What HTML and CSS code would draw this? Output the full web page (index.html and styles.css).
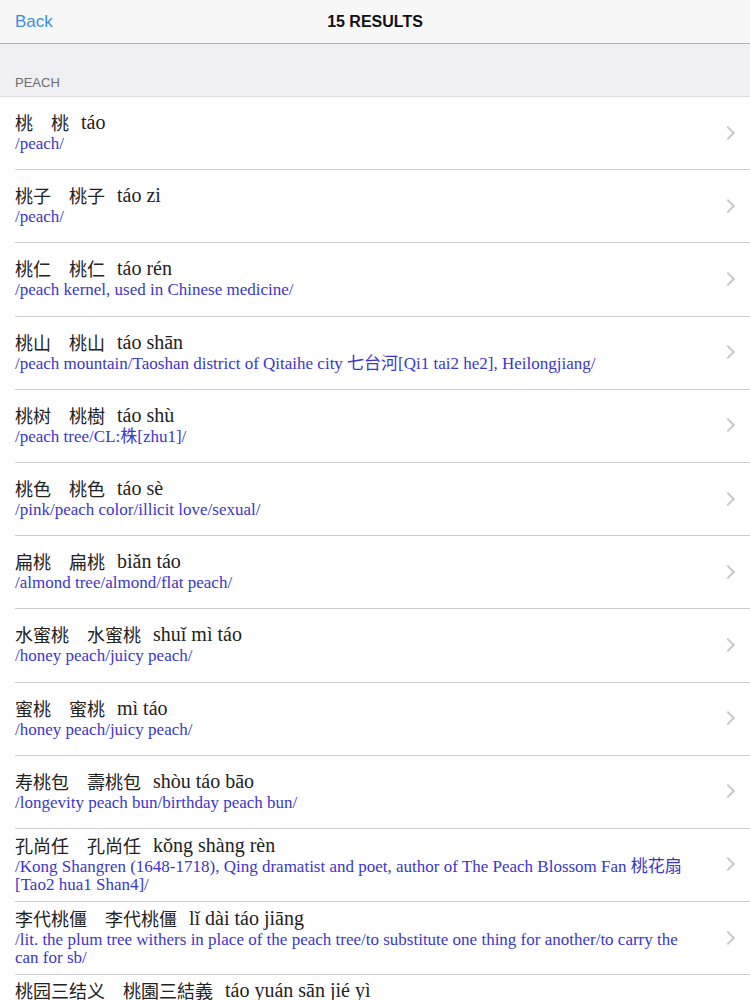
FILE: index.html
```html
<!DOCTYPE html>
<html>
<head>
<meta charset="utf-8">
<link rel="stylesheet" href="styles.css">
</head>
<body>
<div class="nav">
  <span class="back">Back</span>
  <span class="title">15 RESULTS</span>
</div>
<div class="section">PEACH</div>
<ul class="list">
  <li class="row"><div class="text"><div class="head"><span class="s">桃</span><span class="t">桃</span><span class="p">táo</span></div><div class="def">/peach/</div></div><span class="chev"></span></li>
  <li class="row"><div class="text"><div class="head"><span class="s">桃子</span><span class="t">桃子</span><span class="p">táo zi</span></div><div class="def">/peach/</div></div><span class="chev"></span></li>
  <li class="row"><div class="text"><div class="head"><span class="s">桃仁</span><span class="t">桃仁</span><span class="p">táo rén</span></div><div class="def">/peach kernel, used in Chinese medicine/</div></div><span class="chev"></span></li>
  <li class="row"><div class="text"><div class="head"><span class="s">桃山</span><span class="t">桃山</span><span class="p">táo shān</span></div><div class="def">/peach mountain/Taoshan district of Qitaihe city 七台河[Qi1 tai2 he2], Heilongjiang/</div></div><span class="chev"></span></li>
  <li class="row"><div class="text"><div class="head"><span class="s">桃树</span><span class="t">桃樹</span><span class="p">táo shù</span></div><div class="def">/peach tree/CL:株[zhu1]/</div></div><span class="chev"></span></li>
  <li class="row"><div class="text"><div class="head"><span class="s">桃色</span><span class="t">桃色</span><span class="p">táo sè</span></div><div class="def">/pink/peach color/illicit love/sexual/</div></div><span class="chev"></span></li>
  <li class="row"><div class="text"><div class="head"><span class="s">扁桃</span><span class="t">扁桃</span><span class="p">biǎn táo</span></div><div class="def">/almond tree/almond/flat peach/</div></div><span class="chev"></span></li>
  <li class="row"><div class="text"><div class="head"><span class="s">水蜜桃</span><span class="t">水蜜桃</span><span class="p">shuǐ mì táo</span></div><div class="def">/honey peach/juicy peach/</div></div><span class="chev"></span></li>
  <li class="row"><div class="text"><div class="head"><span class="s">蜜桃</span><span class="t">蜜桃</span><span class="p">mì táo</span></div><div class="def">/honey peach/juicy peach/</div></div><span class="chev"></span></li>
  <li class="row"><div class="text"><div class="head"><span class="s">寿桃包</span><span class="t">壽桃包</span><span class="p">shòu táo bāo</span></div><div class="def">/longevity peach bun/birthday peach bun/</div></div><span class="chev"></span></li>
  <li class="row"><div class="text"><div class="head"><span class="s">孔尚任</span><span class="t">孔尚任</span><span class="p">kǒng shàng rèn</span></div><div class="def">/Kong Shangren (1648-1718), Qing dramatist and poet, author of The Peach Blossom Fan 桃花扇[Tao2 hua1 Shan4]/</div></div><span class="chev"></span></li>
  <li class="row"><div class="text"><div class="head"><span class="s">李代桃僵</span><span class="t">李代桃僵</span><span class="p">lǐ dài táo jiāng</span></div><div class="def">/lit. the plum tree withers in place of the peach tree/to substitute one thing for another/to carry the can for sb/</div></div><span class="chev"></span></li>
  <li class="row"><div class="text"><div class="head"><span class="s">桃园三结义</span><span class="t">桃園三結義</span><span class="p">táo yuán sān jié yì</span></div><div class="def">/Oath of the Peach Garden, sworn by Liu Bei 劉備[Liu2 Bei4], Zhang Fei 張飛[Zhang1 Fei1] and Guan Yu 關羽[Guan1 Yu3] at the start of the Romance of the Three Kingdoms 三國演義[San1 guo2 Yan3 yi4]/</div></div><span class="chev"></span></li>
</ul>
</body>
</html>
```
FILE: styles.css
```css
html, body {
  margin: 0;
  padding: 0;
  background: #ffffff;
  overflow: hidden;
}
body {
  font-family: "Liberation Serif", "Noto Sans CJK SC", serif;
  width: 750px;
}
.nav {
  height: 43px;
  background: #f7f7f8;
  border-bottom: 1px solid #b4b4b6;
  display: flex;
  align-items: center;
  justify-content: center;
  position: relative;
  font-family: "Liberation Sans", "Noto Sans CJK SC", sans-serif;
}
.back {
  position: absolute;
  left: 15px;
  top: 12px;
  font-size: 17px;
  color: #3d8ee0;
}
.title {
  font-size: 16px;
  font-weight: bold;
  color: #111;
  padding-top: 1px;
}
.section {
  height: 53px;
  box-sizing: border-box;
  background: #efeff4;
  border-bottom: 1px solid #dcdce0;
  font-family: "Liberation Sans", sans-serif;
  font-size: 13px;
  color: #6d6d72;
  padding: 31px 15px 0;
}
.list {
  list-style: none;
  margin: 0;
  padding: 0 0 0 15px;
}
.row {
  min-height: 73.2px;
  box-sizing: border-box;
  border-bottom: 1px solid #cfced3;
  display: flex;
  align-items: center;
  padding: 5px 0 6px;
}
.text {
  flex: 1;
  padding-right: 25px;
}
.head {
  font-size: 20px;
  line-height: 21px;
  color: #222;
  display: flex;
}
.head .s, .head .t {
  font-family: "Noto Sans CJK SC", sans-serif;
  font-size: 18px;
}
.head .s { margin-right: 18px; }
.head .t { margin-right: 12px; }
.def {
  font-size: 17px;
  line-height: 18px;
  color: #3b36cc;
  margin-top: 2px;
}
.chev {
  width: 8px;
  height: 8px;
  border-top: 2px solid #c7c7cc;
  border-right: 2px solid #c7c7cc;
  transform: rotate(45deg);
  margin-right: 17px;
  flex: none;
}
```
